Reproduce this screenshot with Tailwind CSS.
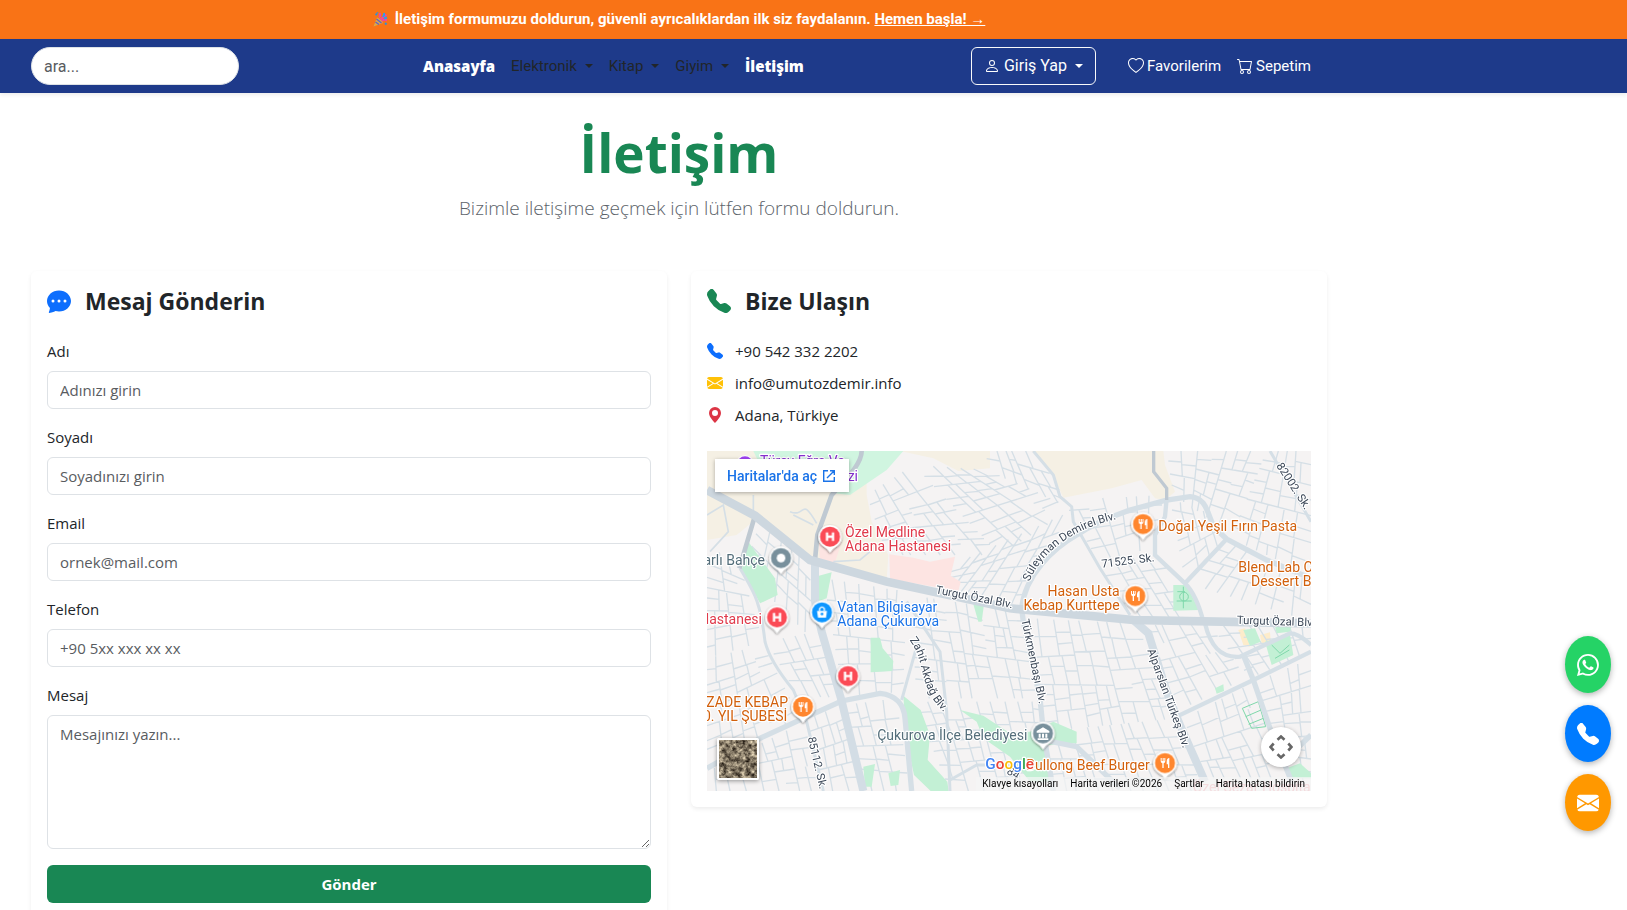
<!DOCTYPE html>
<html lang="tr">
<head>
  <meta charset="UTF-8" />
  <meta name="viewport" content="width=device-width, initial-scale=1.0"/>
  <title>İletişim</title>
  <script src="https://cdn.jsdelivr.net/npm/@tailwindcss/browser@4"></script>
</head>
<body class="bg-white text-[#212529] text-[15px] leading-6 font-['Open_Sans',sans-serif]">

  <!-- icons -->
  <svg class="hidden">
    <symbol id="i-chat" viewBox="0 0 16 16"><path d="M16 8c0 3.866-3.582 7-8 7a9 9 0 0 1-2.347-.306c-.584.296-1.925.864-4.181 1.234-.2.032-.352-.176-.273-.362.354-.836.674-1.95.77-2.966C.744 11.37 0 9.76 0 8c0-3.866 3.582-7 8-7s8 3.134 8 7M5 8a1 1 0 1 0-2 0 1 1 0 0 0 2 0m4 0a1 1 0 1 0-2 0 1 1 0 0 0 2 0m3 1a1 1 0 1 0 0-2 1 1 0 0 0 0 2"/></symbol>
    <symbol id="i-phone" viewBox="0 0 16 16"><path fill-rule="evenodd" d="M1.885.511a1.745 1.745 0 0 1 2.61.163L6.29 2.98c.329.423.445.974.315 1.494l-.547 2.19a.68.68 0 0 0 .178.643l2.457 2.457a.68.68 0 0 0 .644.178l2.189-.547a1.75 1.75 0 0 1 1.494.315l2.306 1.794c.829.645.905 1.87.163 2.611l-1.034 1.034c-.74.74-1.846 1.065-2.877.702a18.6 18.6 0 0 1-7.01-4.42 18.6 18.6 0 0 1-4.42-7.009c-.362-1.03-.037-2.137.703-2.877z"/></symbol>
    <symbol id="i-mail" viewBox="0 0 16 16"><path d="M.05 3.555A2 2 0 0 1 2 2h12a2 2 0 0 1 1.95 1.555L8 8.414zM0 4.697v7.104l5.803-3.558zM6.761 8.83l-6.57 4.027A2 2 0 0 0 2 14h12a2 2 0 0 0 1.808-1.144l-6.57-4.027L8 9.586zm3.436-.586L16 11.801V4.697z"/></symbol>
    <symbol id="i-geo" viewBox="0 0 16 16"><path d="M8 16s6-5.686 6-10A6 6 0 0 0 2 6c0 4.314 6 10 6 10m0-7a3 3 0 1 1 0-6 3 3 0 0 1 0 6"/></symbol>
    <symbol id="i-person" viewBox="0 0 16 16"><path d="M8 8a3 3 0 1 0 0-6 3 3 0 0 0 0 6m2-3a2 2 0 1 1-4 0 2 2 0 0 1 4 0m4 8c0 1-1 1-1 1H3s-1 0-1-1 1-4 6-4 6 3 6 4m-1-.004c-.001-.246-.154-.986-.832-1.664C11.516 10.68 10.289 10 8 10s-3.516.68-4.168 1.332c-.678.678-.83 1.418-.832 1.664z"/></symbol>
    <symbol id="i-heart" viewBox="0 0 16 16"><path d="m8 2.748-.717-.737C5.6.281 2.514.878 1.4 3.053c-.523 1.023-.641 2.5.314 4.385.92 1.815 2.834 3.989 6.286 6.357 3.452-2.368 5.365-4.542 6.286-6.357.955-1.886.838-3.362.314-4.385C13.486.878 10.4.28 8.717 2.01zM8 15C-7.333 4.868 3.279-3.04 7.824 1.143q.09.083.176.171a3 3 0 0 1 .176-.17C12.72-3.042 23.333 4.867 8 15"/></symbol>
    <symbol id="i-cart" viewBox="0 0 16 16"><path d="M0 1.5A.5.5 0 0 1 .5 1H2a.5.5 0 0 1 .485.379L2.89 3H14.5a.5.5 0 0 1 .491.592l-1.5 8A.5.5 0 0 1 13 12H4a.5.5 0 0 1-.491-.408L2.01 3.607 1.61 2H.5a.5.5 0 0 1-.5-.5M3.102 4l1.313 7h8.17l1.313-7zM5 12a2 2 0 1 0 0 4 2 2 0 0 0 0-4m7 0a2 2 0 1 0 0 4 2 2 0 0 0 0-4m-7 1a1 1 0 1 1 0 2 1 1 0 0 1 0-2m7 0a1 1 0 1 1 0 2 1 1 0 0 1 0-2"/></symbol>
    <symbol id="i-whatsapp" viewBox="0 0 16 16"><path d="M13.601 2.326A7.85 7.85 0 0 0 7.994 0C3.627 0 .068 3.558.064 7.926c0 1.399.366 2.76 1.057 3.965L0 16l4.204-1.102a7.9 7.9 0 0 0 3.79.965h.004c4.368 0 7.926-3.558 7.93-7.93A7.9 7.9 0 0 0 13.6 2.326zM7.994 14.521a6.6 6.6 0 0 1-3.356-.92l-.24-.144-2.494.654.666-2.433-.156-.251a6.56 6.56 0 0 1-1.007-3.505c0-3.626 2.957-6.584 6.591-6.584a6.56 6.56 0 0 1 4.66 1.931 6.56 6.56 0 0 1 1.928 4.66c-.004 3.639-2.961 6.592-6.592 6.592m3.615-4.934c-.197-.099-1.17-.578-1.353-.646-.182-.065-.315-.099-.445.099-.133.197-.513.646-.627.775-.114.133-.232.148-.43.05-.197-.1-.836-.308-1.592-.985-.59-.525-.985-1.175-1.103-1.372-.114-.198-.011-.304.088-.403.087-.088.197-.232.296-.346.1-.114.133-.198.198-.33.065-.134.034-.248-.015-.347-.05-.099-.445-1.076-.612-1.47-.16-.389-.323-.335-.445-.34-.114-.007-.247-.007-.38-.007a.73.73 0 0 0-.529.247c-.182.198-.691.677-.691 1.654s.71 1.916.81 2.049c.098.133 1.394 2.132 3.383 2.992.47.205.84.326 1.129.418.475.152.904.129 1.246.08.38-.058 1.171-.48 1.338-.943.164-.464.164-.86.114-.943-.049-.084-.182-.133-.38-.232"/></symbol>
    <symbol id="i-caret" viewBox="0 0 8 4"><path d="M0 0h8L4 4z"/></symbol>
    <!-- map pin, 80x96, circle centre at 40,40 -->
    <symbol id="pin" viewBox="0 0 80 96"><path d="M40 5a35 35 0 0 0-22 62q14 8 22 21q8-13 22-21A35 35 0 0 0 40 5z" fill="#fff"/><circle cx="40" cy="40" r="30" fill="currentColor"/></symbol>
    <symbol id="fork" viewBox="0 0 30 34"><path d="M2 2v9q0 6 5 7v14h4V18q5-1 5-7V2h-3v9h-2V2H8v9H5V2zM28 2q-8 1-8 11v8h4v11h4z" fill="#fff"/></symbol>
  </svg>

  <!-- announcement -->
  <div class="bg-[#f97316] text-white font-['Roboto',sans-serif] font-bold text-[15px] leading-[23px]">
    <div class="max-w-[1358px] py-2 flex justify-center items-center">
      <svg class="w-[15px] h-[15px] mr-[7px]" viewBox="0 0 30 30" fill="none">
        <path d="M1 29L8 11q9 3 12 11z" fill="#d8a94a"/>
        <path d="M5 20l7 5M7 14l10 8" stroke="#6a5fc0" stroke-width="3"/>
        <path d="M12 11q4-4 1-9M18 18q4-4 10-1M15 15l12-10" stroke="#f0479f" stroke-width="4"/>
        <path d="M19 8q4 1 3-6M22 13l6-2" stroke="#2f9de8" stroke-width="4"/>
        <path d="M5 4l3 2M24 22l3 3M8 1l1 2" stroke="#2f8fd8" stroke-width="4"/>
      </svg>
      <span>İletişim formumuzu doldurun, güvenli ayrıcalıklardan ilk siz faydalanın. <a href="#form" class="underline">Hemen başla! →</a></span>
    </div>
  </div>

  <!-- navbar -->
  <nav class="bg-[#1e3a8a] shadow-[0_2px_4px_rgba(0,0,0,0.075)] font-['Roboto',sans-serif]">
    <div class="max-w-[1358px] px-[31px] py-2 flex items-center">
      <input type="search" aria-label="ara" placeholder="ara..." class="w-[208px] h-[38px] px-3 rounded-full border border-[#dee2e6] bg-white text-base placeholder-[#595c5f]">
      <ul class="ml-44 flex items-center text-[15px]">
        <li><a href="#" class="block px-2 text-white font-extrabold text-[15px] font-['Open_Sans',sans-serif]">Anasayfa</a></li>
        <li><a href="#" class="flex items-center gap-2 px-2">Elektronik <svg class="w-2 h-1" fill="currentColor"><use href="#i-caret"/></svg></a></li>
        <li><a href="#" class="flex items-center gap-2 px-2">Kitap <svg class="w-2 h-1" fill="currentColor"><use href="#i-caret"/></svg></a></li>
        <li><a href="#" class="flex items-center gap-2 px-2">Giyim <svg class="w-2 h-1" fill="currentColor"><use href="#i-caret"/></svg></a></li>
        <li><a href="#" class="block px-2 text-white font-extrabold text-[15px] font-['Open_Sans',sans-serif]">İletişim</a></li>
      </ul>
      <div class="ml-auto pr-4 flex items-center text-white text-[15px]">
        <button class="h-[38px] px-3 mr-8 flex items-center border border-[#f8f9fa] rounded-md text-base">
          <svg class="w-4 h-4 mr-1" fill="currentColor"><use href="#i-person"/></svg>Giriş Yap
          <svg class="w-2 h-1 ml-2" fill="currentColor"><use href="#i-caret"/></svg>
        </button>
        <a href="#" class="flex items-center gap-[3px] mr-4"><svg class="w-4 h-4" fill="currentColor"><use href="#i-heart"/></svg>Favorilerim</a>
        <a href="#" class="flex items-center gap-[3px]"><svg class="w-4 h-4" fill="currentColor"><use href="#i-cart"/></svg>Sepetim</a>
      </div>
    </div>
  </nav>

  <main class="max-w-[1358px] px-[31px] pt-7 pb-12">
    <header class="text-center mb-12">
      <h1 class="text-[53px] leading-[64px] font-bold text-[#198754] mb-2">İletişim</h1>
      <p class="text-[19px] leading-[30px] font-light text-[#5c636a]">Bizimle iletişime geçmek için lütfen formu doldurun.</p>
    </header>

    <div class="grid grid-cols-2 gap-6 items-start">
      <!-- message form -->
      <section class="rounded-md p-4 shadow-[0_2px_4px_rgba(0,0,0,0.075)]">
        <h2 class="flex items-center gap-[14px] text-[23px] leading-7 font-bold mb-6">
          <svg class="w-6 h-6 text-[#0d6efd]" fill="currentColor"><use href="#i-chat"/></svg>Mesaj Gönderin
        </h2>
        <form id="form" class="flex flex-col gap-4">
          <div>
            <label for="ad" class="block mb-2">Adı</label>
            <input id="ad" type="text" placeholder="Adınızı girin" class="block w-full h-[38px] px-3 border border-[#dee2e6] rounded-md placeholder-[#595c5f]">
          </div>
          <div>
            <label for="soyad" class="block mb-2">Soyadı</label>
            <input id="soyad" type="text" placeholder="Soyadınızı girin" class="block w-full h-[38px] px-3 border border-[#dee2e6] rounded-md placeholder-[#595c5f]">
          </div>
          <div>
            <label for="email" class="block mb-2">Email</label>
            <input id="email" type="email" placeholder="ornek@mail.com" class="block w-full h-[38px] px-3 border border-[#dee2e6] rounded-md placeholder-[#595c5f]">
          </div>
          <div>
            <label for="tel" class="block mb-2">Telefon</label>
            <input id="tel" type="tel" placeholder="+90 5xx xxx xx xx" class="block w-full h-[38px] px-3 border border-[#dee2e6] rounded-md placeholder-[#595c5f]">
          </div>
          <div>
            <label for="mesaj" class="block mb-2">Mesaj</label>
            <textarea id="mesaj" rows="5" placeholder="Mesajınızı yazın..." class="block w-full px-3 py-[6px] border border-[#dee2e6] rounded-md placeholder-[#595c5f]"></textarea>
          </div>
          <button type="submit" class="h-[38px] rounded-md bg-[#198754] text-white font-bold">Gönder</button>
        </form>
      </section>

      <!-- contact info -->
      <section class="rounded-md p-4 shadow-[0_2px_4px_rgba(0,0,0,0.075)]">
        <h2 class="flex items-center gap-[14px] text-[23px] leading-7 font-bold mb-6">
          <svg class="w-6 h-6 text-[#198754]" fill="currentColor"><use href="#i-phone"/></svg>Bize Ulaşın
        </h2>
        <ul class="flex flex-col gap-2 mb-6">
          <li class="flex items-center gap-3"><svg class="w-4 h-4 text-[#0d6efd]" fill="currentColor"><use href="#i-phone"/></svg>+90 542 332 2202</li>
          <li class="flex items-center gap-3"><svg class="w-4 h-4 text-[#ffc107]" fill="currentColor"><use href="#i-mail"/></svg>info@umutozdemir.info</li>
          <li class="flex items-center gap-3"><svg class="w-4 h-4 text-[#dc3545]" fill="currentColor"><use href="#i-geo"/></svg>Adana, Türkiye</li>
        </ul>

        <div class="relative h-[340px] overflow-hidden font-['Roboto',sans-serif]">
          <svg class="w-full h-full" viewBox="21 18 1812 1020" preserveAspectRatio="xMidYMid slice">
            <defs>
              <filter id="ground" x="0" y="0" width="1" height="1" color-interpolation-filters="sRGB">
                <feTurbulence type="fractalNoise" baseFrequency="0.22" numOctaves="4" seed="7"/>
                <feColorMatrix values="1.3 0 0 0 -.14  1.25 0 0 0 -.16  1.1 0 0 0 -.16  0 0 0 0 1"/>
              </filter>
              <filter id="shade" x="-.2" y="-.2" width="1.4" height="1.4">
                <feDropShadow dx="0" dy="3" stdDeviation="3" flood-color="#000" flood-opacity=".6"/>
              </filter>
              <path id="demirel" d="M988 410C1022 328 1110 248 1270 218"/>
              <path id="zahit" d="M628 585C680 650 650 720 730 800"/>
            </defs>
            <rect x="21" y="18" width="1812" height="1020" fill="#f5f3f3"/>

            <!-- land use -->
            <g fill="#f5f0e4">
              <path d="M21 18H500V150L515 230L545 290L565 330L560 405L345 345L165 225L110 270L21 285z"/>
              <path d="M600 18H870V70L775 78L700 40z"/>
              <path d="M995 18H1390L1395 60L1425 140L1395 165L1365 160L1325 105L1235 130L1090 158L1060 90z"/>
              <path d="M1615 555L1635 550L1650 605L1630 600zM1680 570L1710 562L1712 590L1685 595z" fill="#fdeccb"/>
            </g>
            <g fill="#d0f5e0">
              <path d="M160 18H610L560 75L450 150L400 145L180 60z"/>
            </g>
            <g id="streets" fill="none" stroke="#d5dfe6" stroke-width="4"></g>
            <g fill="#c3f0d5">
              <path d="M145 290L225 400L233 450L180 475L125 375z"/>
              <path d="M357 392L395 382L380 460L357 468z"/>
              <path d="M820 478H852L845 530H835z"/>
              <path d="M512 578H540L548 610L580 648L577 678L512 682z"/>
              <path d="M610 752L662 795L690 870L683 945L742 1010L746 1038H692L642 990L618 880z"/>
              <path d="M780 795L850 812L930 865L990 860L1060 830L1130 860V895L1042 900L1050 1010H990L930 935L850 880L830 830z"/>
              <path d="M490 965L525 957L515 1025H495zM565 985L600 975L595 1020L572 1023z"/>
              <path d="M1420 420H1460L1497 495L1420 497z"/>
              <path d="M1695 590L1770 570L1780 630L1715 660zM1630 555L1665 550L1682 590L1650 603zM1545 730L1570 718L1572 738L1550 746z"/>
              <path d="M1720 525H1780L1770 560L1730 565zM1760 970L1800 955L1833 985V1000H1765z"/>
            </g>
            <g fill="#fde4e2">
              <path d="M568 328L640 338L690 350L765 335L752 392L782 410L775 438L570 402z"/>
              <path d="M357 292L425 290L402 362L360 355z"/>
            </g>
            <g fill="none" stroke="#7fd8ab" stroke-width="3">
              <path d="M1627 790L1675 770L1697 845L1655 850zM1637 815L1683 795M1646 838L1690 820"/>
              <path d="M1432 440H1455M1450 425V490M1430 468H1475"/><circle cx="1452" cy="455" r="13"/>
              <path d="M1715 600L1740 625L1768 600M1725 640L1768 615"/>
            </g>

            <!-- secondary roads -->
            <g fill="none" stroke="#d5dfe6" stroke-width="9">
              <path d="M1000 18L1060 90L1080 155L1115 185L1120 230L1200 370L1290 510"/>
              <path d="M120 370C160 440 180 460 195 590Q210 650 280 735L320 830L370 1038"/>
              <path d="M650 605L605 765M620 470L720 620L740 800L750 1038"/>
              <path d="M750 1005L830 960H940M1710 18L1833 230"/>
              <path d="M21 210L70 180L85 260L30 320" stroke-width="5"/>
              <path d="M270 200C320 220 300 150 350 235M280 210L340 240M400 350L480 345L510 320M160 150V210" stroke-width="5"/>
            </g>
            <g fill="none" stroke="#d5dfe6" stroke-width="16">
              <path d="M965 490C975 390 1060 310 1130 270Q1190 230 1290 195L1400 165L1470 155C1525 160 1520 210 1545 250L1580 282L1700 345L1833 400"/>
              <path d="M1580 282L1455 415M1400 160L1395 215L1365 270V330L1455 415Q1490 450 1510 530" stroke-width="13"/>
              <path d="M965 490L970 530L1020 760L1030 860L1060 1038M1030 885L1130 905L1260 1030"/>
              <path d="M1515 535C1530 600 1560 640 1620 635L1770 565C1800 565 1820 590 1833 600M1430 815L1660 705L1833 620" stroke-width="13"/>
              <path d="M1630 630L1660 705L1710 850L1775 1010M1833 870L1760 940"/>
              <path d="M21 970L180 880L310 820L425 768L540 745C590 750 612 780 615 820L635 1038"/>
            </g>
            <g fill="none" stroke="#d3dde5" stroke-width="24">
              <path d="M345 345V470L365 560L425 768L490 1038M1300 525L1345 565L1400 740L1440 840L1515 1010"/>
            </g>
            <g fill="none" stroke="#bfc9d2" stroke-width="14">
              <path d="M485 18C485 60 430 110 395 150L352 270L345 345M165 212L118 370"/>
              <path d="M1361 18V80L1400 130V165" stroke-width="10"/>
            </g>
            <path d="M21 135L165 212L330 345L560 410L930 490L1300 525L1833 535" fill="none" stroke="#cdd7df" stroke-width="26"/>

            <!-- pins -->
            <g filter="url(#shade)">
              <use href="#pin" x="350" y="235" width="80" height="96" color="#fb4b57"/>
              <use href="#pin" x="191" y="477" width="80" height="96" color="#fb4b57"/>
              <use href="#pin" x="404" y="653" width="80" height="96" color="#fb4b57"/>
              <use href="#pin" x="203" y="299" width="80" height="96" color="#78909c"/>
              <use href="#pin" x="326" y="462" width="80" height="96" color="#0b95ff"/>
              <use href="#pin" x="269" y="745" width="80" height="96" color="#ff862e"/>
              <use href="#pin" x="1289" y="197" width="80" height="96" color="#ff862e"/>
              <use href="#pin" x="1266" y="413" width="80" height="96" color="#ff862e"/>
              <use href="#pin" x="1355" y="914" width="80" height="96" color="#ff862e"/>
              <use href="#pin" x="989" y="825" width="80" height="96" color="#78909c"/>
            </g>
            <g>
              <circle cx="243" cy="339" r="13" fill="#fff"/>
              <path d="M381 262V288M399 262V288M381 275H399M222 504V530M240 504V530M222 517H240M435 680V706M453 680V706M435 693H453" stroke="#fff" stroke-width="7" fill="none"/>
              <path d="M351 498H381L378 518H354z" fill="#fff"/><path d="M359 498V491Q366 481 373 491V498" stroke="#fff" stroke-width="4" fill="none"/><circle cx="366" cy="507" r="4" fill="#0b95ff"/>
              <use href="#fork" x="294" y="769" width="30" height="34"/>
              <use href="#fork" x="1314" y="220" width="30" height="34"/>
              <use href="#fork" x="1291" y="436" width="30" height="34"/>
              <use href="#fork" x="1380" y="937" width="30" height="34"/>
              <path d="M1010 858L1029 847L1048 858V863H1010zM1013 880H1045V885H1013zM1016 866H1022V878H1016zM1026 866H1032V878H1026zM1036 866H1042V878H1036z" fill="#fff"/>
            </g>

            <!-- labels -->
            <g font-size="42" stroke="#fff" stroke-width="7" stroke-linejoin="round" paint-order="stroke">
              <g fill="#8430ce">
                <circle cx="135" cy="58" r="24" fill="#a142f4"/>
                <text x="180" y="64">Türev Eğrs Ve</text><text x="443" y="108">zi</text>
              </g>
              <g fill="#e03a4b">
                <text x="435" y="276">Özel Medline</text><text x="435" y="318">Adana Hastanesi</text>
                <text x="186" y="537" text-anchor="end">Hastanesi</text>
                <text x="1478" y="1042" fill="#f0a0a8" stroke="none">Özel Sezar Hospital</text>
              </g>
              <g fill="#1a73e8"><text x="412" y="501">Vatan Bilgisayar</text><text x="412" y="543">Adana Çukurova</text></g>
              <g fill="#546e7a"><text x="195" y="360" text-anchor="end">Pınarlı Bahçe</text><text x="982" y="885" text-anchor="end">Çukurova İlçe Belediyesi</text></g>
              <g fill="#d2600c">
                <text x="1375" y="258">Doğal Yeşil Fırın Pasta</text>
                <text x="1615" y="381">Blend Lab Coffee</text><text x="1653" y="423">Dessert Bar</text>
                <text x="1259" y="454" text-anchor="end">Hasan Usta</text><text x="1259" y="496" text-anchor="end">Kebap Kurttepe</text>
                <text x="264" y="786" text-anchor="end">ŞEHZADE KEBAP</text><text x="262" y="828" text-anchor="end">100. YIL ŞUBESİ</text>
                <text x="1349" y="976" text-anchor="end">Bullong Beef Burger</text>
              </g>
              <g fill="#3c4858" font-size="34">
                <text transform="translate(706 445) rotate(11)">Turgut Özal Blv.</text>
                <text transform="translate(1610 536) rotate(2)">Turgut Özal Blv.</text>
                <text transform="translate(1206 368) rotate(-7)">71525. Sk.</text>
                <text transform="translate(1728 62) rotate(57)">82002. Sk.</text>
                <text transform="translate(964 525) rotate(78)">Türkmenbaşı Blv.</text>
                <text transform="translate(1342 616) rotate(70)">Alparslan Türkeş Blv.</text>
                <text transform="translate(323 878) rotate(77)">85112. Sk.</text>
                <text transform="translate(918 985) rotate(30)">84</text>
                <text><textPath href="#demirel">Süleyman Demirel Blv.</textPath></text>
                <text><textPath href="#zahit">Zahit Akdağ Blv.</textPath></text>
              </g>
              <text x="856" y="973" font-size="46" font-weight="500"><tspan fill="#4285f4">G</tspan><tspan fill="#ea4335">o</tspan><tspan fill="#fbbc04">o</tspan><tspan fill="#4285f4">g</tspan><tspan fill="#34a853">l</tspan><tspan fill="#ea4335">e</tspan></text>
            </g>
          </svg>

          <a href="#" class="absolute left-2 top-2 h-[33px] pl-3 pr-[14px] flex items-center gap-[6px] bg-white shadow-[0_1px_4px_rgba(0,0,0,0.3)] text-[#1a73e8] text-sm font-medium">Haritalar'da aç
            <svg class="w-[12px] h-[12px]" viewBox="0 0 12 12" fill="none" stroke="currentColor" stroke-width="1.4"><path d="M5 .7H.7v10.6h10.6V7M7 .7h4.3V5M11 1L4 8"/></svg>
          </a>
          <button aria-label="Uydu görünümü" class="absolute left-[10px] bottom-[11px] w-[42px] h-[42px] border-2 border-white rounded-xs shadow-[0_1px_4px_rgba(0,0,0,0.4)]">
            <svg class="w-full h-full" viewBox="0 0 38 38"><rect width="38" height="38" filter="url(#ground)"/></svg>
          </button>
          <button aria-label="Harita kamerası" class="absolute right-[10px] bottom-6 w-10 h-10 rounded-full bg-white shadow-[0_1px_4px_rgba(0,0,0,0.3)] flex items-center justify-center">
            <svg class="w-6 h-6" viewBox="0 0 24 24" fill="none" stroke="#666" stroke-width="2.6"><path d="M8.500 4.700L12 1.500L15.500 4.700M8.500 19.300L12 22.500L15.500 19.300M4.700 8.500L1.500 12L4.700 15.500M19.300 8.500L22.500 12L19.300 15.500"/></svg>
          </button>
          <div class="absolute right-0 bottom-0 flex gap-3 px-[6px] bg-[#f5f5f5]/70 text-black text-[10px] leading-[14px]">
            <button>Klavye kısayolları</button><span>Harita verileri ©2026</span><a href="#">Şartlar</a><a href="#">Harita hatası bildirin</a>
          </div>
        </div>
      </section>
    </div>
  </main>

  <!-- quick contact -->
  <div class="fixed right-4 bottom-[79px] flex flex-col gap-3 text-white">
    <a href="#" aria-label="WhatsApp" class="w-[46px] h-[57px] rounded-[50%] bg-[#25d366] shadow-[0_2px_6px_rgba(0,0,0,0.3)] flex items-center justify-center"><svg class="w-[22px] h-[22px]" fill="currentColor"><use href="#i-whatsapp"/></svg></a>
    <a href="#" aria-label="Telefon" class="w-[46px] h-[57px] rounded-[50%] bg-[#007bff] shadow-[0_2px_6px_rgba(0,0,0,0.3)] flex items-center justify-center"><svg class="w-[22px] h-[22px]" fill="currentColor"><use href="#i-phone"/></svg></a>
    <a href="#" aria-label="Email" class="w-[46px] h-[57px] rounded-[50%] bg-[#ff9800] shadow-[0_2px_6px_rgba(0,0,0,0.3)] flex items-center justify-center"><svg class="w-[22px] h-[22px]" fill="currentColor"><use href="#i-mail"/></svg></a>
  </div>

  <script>
    // neighbourhoods: four corners each, split again and again into blocks
    const areas = [
      [[500,150],[640,60],[900,330],[560,330]],
      [[640,60],[860,75],[1120,190],[900,330]],
      [[860,18],[1010,18],[1110,190],[860,75]],
      [[780,350],[1110,200],[960,480],[700,440]],
      [[1090,165],[1390,150],[1370,300],[1200,360]],
      [[1200,370],[1365,320],[1500,520],[1290,515]],
      [[1410,160],[1540,210],[1570,285],[1455,410]],
      [[1400,18],[1700,18],[1600,270],[1420,150]],
      [[1700,18],[1833,18],[1833,390],[1590,280]],
      [[1580,290],[1833,410],[1833,530],[1460,415]],
      [[180,230],[330,345],[335,580],[130,380]],
      [[21,300],[120,360],[190,590],[21,640]],
      [[21,640],[190,600],[300,820],[21,960]],
      [[200,590],[350,560],[420,760],[290,750]],
      [[21,980],[310,830],[370,1038],[21,1038]],
      [[320,820],[425,780],[490,1038],[370,1038]],
      [[370,400],[620,440],[610,740],[430,755]],
      [[430,780],[590,760],[630,1038],[495,1038]],
      [[630,450],[960,500],[1010,760],[650,760]],
      [[640,770],[1020,770],[1050,1038],[750,1038]],
      [[980,520],[1310,535],[1430,820],[1030,860]],
      [[1030,860],[1430,820],[1510,1038],[1060,1038]],
      [[1330,540],[1530,540],[1640,700],[1430,800]],
      [[1530,540],[1833,545],[1833,620],[1650,700]],
      [[1450,820],[1655,715],[1760,1000],[1520,1000]],
      [[1665,710],[1833,640],[1833,1038],[1770,1000]]
    ];

    let seed = 11;
    const rnd = () => (seed = (seed * 16807) % 2147483647) / 2147483647;
    const mix = (a, b, t) => [a[0] + (b[0] - a[0]) * t, a[1] + (b[1] - a[1]) * t];
    const len = (a, b) => Math.hypot(a[0] - b[0], a[1] - b[1]);
    let d = '';

    function split([a, b, c, e]) {
      const w = Math.max(len(a, b), len(e, c)), h = Math.max(len(b, c), len(a, e));
      if (Math.max(w, h) < 62 || (w * h < 2300 && rnd() < 0.6)) return;
      const t = 0.35 + rnd() * 0.3, u = t + (rnd() - 0.5) * 0.12;
      const horizontal = w > h * 0.8;
      const p = horizontal ? mix(a, b, t) : mix(b, c, t);
      const q = horizontal ? mix(e, c, u) : mix(a, e, u);
      if (rnd() < 0.93) d += `M${p.map(Math.round)}L${q.map(Math.round)}`;
      if (horizontal) { split([a, p, q, e]); split([p, b, c, q]); }
      else { split([a, b, p, q]); split([q, p, c, e]); }
    }
    areas.forEach(split);

    const path = document.createElementNS('http://www.w3.org/2000/svg', 'path');
    path.setAttribute('d', d);
    document.getElementById('streets').appendChild(path);
  </script>
</body>
</html>
